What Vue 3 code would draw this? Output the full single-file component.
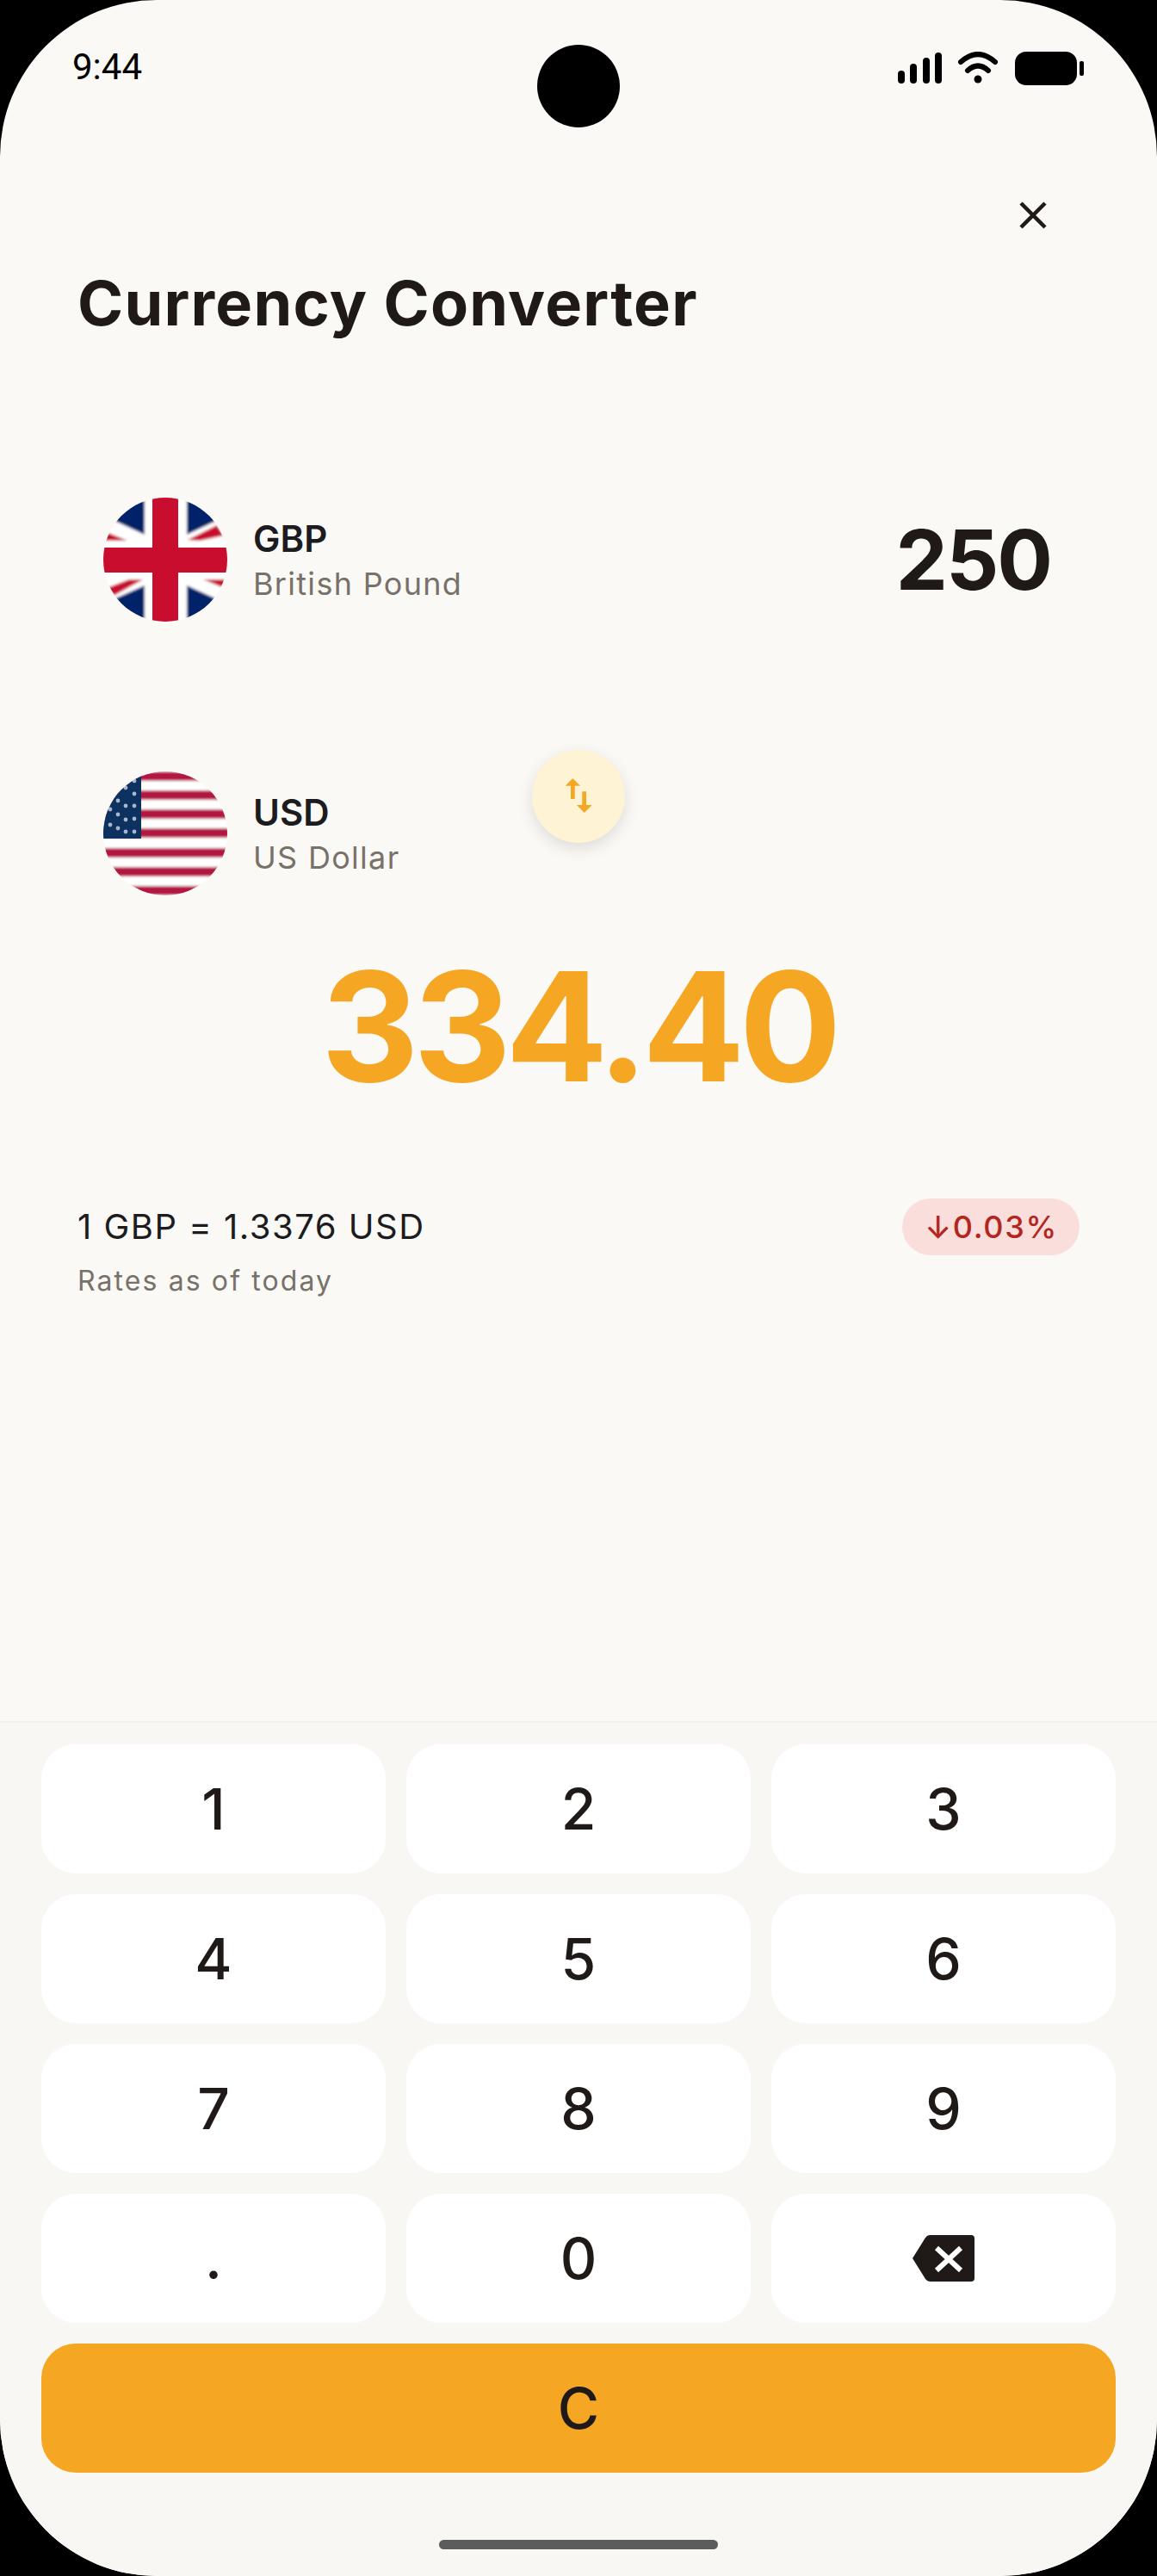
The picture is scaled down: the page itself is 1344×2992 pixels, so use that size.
<template>
  <div class="phone">
    <div class="camera"></div>

    <div class="status-bar">
      <span class="time">9:44</span>
      <svg class="status-icons" width="216" height="40" viewBox="0 0 216 40">
        <rect x="0" y="22" width="8" height="15" rx="4" />
        <rect x="14" y="14" width="8" height="23" rx="4" />
        <rect x="29" y="7" width="8" height="30" rx="4" />
        <rect x="43" y="1" width="8" height="36" rx="4" />
        <path d="M73 12 Q93 -6 113 12" fill="none" stroke="#000" stroke-width="6" stroke-linecap="round" />
        <path d="M81 22 Q93 11 105 22" fill="none" stroke="#000" stroke-width="6" stroke-linecap="round" />
        <circle cx="93" cy="32" r="4.5" />
        <rect x="136" y="0" width="72" height="39" rx="13" />
        <rect x="211" y="11" width="5" height="17" rx="2" />
      </svg>
    </div>

    <div class="close-row">
      <svg width="32" height="32" viewBox="0 0 32 32">
        <path d="M2 2 L30 30 M30 2 L2 30" stroke="#1f1a17" stroke-width="4.5" fill="none" />
      </svg>
    </div>

    <h1 class="title">Currency Converter</h1>

    <div class="currency-row from">
      <div class="flag">
        <svg width="144" height="144" viewBox="0 0 144 144">
          <g filter="url(#soft)">
            <rect x="-6" y="-6" width="156" height="156" fill="#fff" />
            <path d="M48 -6V43L-6 18V-6Z M97 -6V43L150 18V-6Z M48 102V150H-6V126Z M97 102V150H150V126Z" fill="#012169" />
            <path d="M-6 36L28 50H-6Z M98 49L132 32L140 44L112 50Z M46 95H30L4 105L12 114Z M116 95H150V109Z" fill="#c8102e" />
          </g>
          <g filter="url(#softer)">
            <path d="M57 -6H87V58H150V87H87V150H57V87H-6V58H57Z" fill="#c8102e" />
          </g>
          <defs>
            <filter id="soft" filterUnits="userSpaceOnUse" x="-10" y="-10" width="164" height="164"><feGaussianBlur stdDeviation="1.5" /></filter>
            <filter id="softer" filterUnits="userSpaceOnUse" x="-10" y="-10" width="164" height="164"><feGaussianBlur stdDeviation="0.7" /></filter>
          </defs>
        </svg>
      </div>
      <div class="names">
        <div class="code">GBP</div>
        <div class="name">British Pound</div>
      </div>
      <div class="amount">250</div>
    </div>

    <div class="currency-row to">
      <div class="flag">
        <svg width="144" height="144" viewBox="0 0 144 144">
          <g filter="url(#soft)">
            <rect x="-6" y="-6" width="156" height="156" fill="#fff" />
            <rect v-for="y in stripes" :key="y" x="-6" :y="y" width="156" height="11" fill="#b31942" />
          </g>
          <g filter="url(#softer)">
            <rect x="-6" y="-6" width="50" height="84" fill="#0a3161" />
            <circle v-for="(s, i) in stars" :key="i" :cx="s[0]" :cy="s[1]" r="2.4" fill="#a9b7cb" />
          </g>
        </svg>
      </div>
      <div class="names">
        <div class="code">USD</div>
        <div class="name">US Dollar</div>
      </div>
      <button class="swap">
        <svg width="32" height="42" viewBox="0 0 32 42">
          <path d="M9.3 0L18 8.7H11.7V24H7V8.7H0.7Z M20.3 15.3H25V31H31.7L22.7 40L14 31H20.3Z" fill="#f5a623" />
        </svg>
      </button>
    </div>

    <div class="result">334.40</div>

    <div class="rate-row">
      <div>
        <div class="rate">1 GBP = 1.3376 USD</div>
        <div class="rate-date">Rates as of today</div>
      </div>
      <div class="change">↓0.03%</div>
    </div>

    <div class="keypad">
      <div class="keys">
        <button v-for="k in keys" :key="k" class="key">{{ k }}</button>
        <button class="key">
          <svg width="72" height="54" viewBox="0 0 72 54">
            <path d="M0 27L15 3Q17 0 20 0H68Q72 0 72 4V50Q72 54 68 54H20Q17 54 15 51Z" fill="#1f1a17" />
            <path d="M28 15L56 41M56 15L28 41" stroke="#fff" stroke-width="6" fill="none" />
          </svg>
        </button>
        <button class="key clear">C</button>
      </div>
      <div class="home-bar"></div>
    </div>
  </div>
</template>

<script setup>
const keys = ['1', '2', '3', '4', '5', '6', '7', '8', '9', '.', '0']
const stripes = [0, 22, 44, 66, 89, 111, 133]
const stars = [
  [36, 11], [26, 19], [36, 26], [17, 34], [26, 40], [36, 40], [8, 44],
  [17, 50], [26, 56], [36, 55], [8, 62], [17, 66], [26, 70], [36, 70]
]
</script>

<style scoped>
.phone {
  position: relative;
  width: 1344px;
  height: 2992px;
  background: #faf9f5;
  border-radius: 182px;
  overflow: hidden;
  display: flex;
  flex-direction: column;
  font-family: Inter, "Noto Sans", sans-serif;
  color: #1f1a17;
}
.camera {
  position: absolute;
  left: 624px;
  top: 52px;
  width: 96px;
  height: 96px;
  border-radius: 50%;
  background: #000;
}
.status-bar {
  height: 120px;
  padding: 60px 84px 0;
  box-sizing: border-box;
  display: flex;
  justify-content: space-between;
  align-items: flex-start;
}
.time {
  font-family: Roboto, sans-serif;
  font-size: 42px;
  line-height: 36px;
  color: #000;
}
.status-icons {
  margin-right: 1px;
}
.close-row {
  height: 32px;
  margin-top: 114px;
  padding-right: 128px;
  display: flex;
  justify-content: flex-end;
}
.title {
  margin: 38px 0 0 90px;
  font-size: 72px;
  line-height: 96px;
  font-weight: 700;
  letter-spacing: 1.2px;
}
.currency-row {
  position: relative;
  display: flex;
  align-items: center;
  padding: 0 120px;
}
.from {
  margin-top: 178px;
}
.to {
  margin-top: 174px;
}
.flag {
  width: 144px;
  height: 144px;
  border-radius: 50%;
  overflow: hidden;
  flex-shrink: 0;
}
.flag svg {
  display: block;
}
.names {
  margin-left: 30px;
}
.code {
  font-size: 42px;
  line-height: 50px;
  font-weight: 600;
  color: #1c1b1f;
}
.name {
  margin-top: 5px;
  font-size: 36px;
  line-height: 44px;
  letter-spacing: 1.3px;
  color: #78716a;
}
.amount {
  margin-left: auto;
  margin-right: 3px;
  font-size: 96px;
  line-height: 120px;
  font-weight: 700;
  letter-spacing: -2px;
}
.swap {
  position: absolute;
  left: 618px;
  top: -25px;
  width: 108px;
  height: 108px;
  padding: 0;
  border: none;
  border-radius: 50%;
  background: #fff3d6;
  box-shadow: 0 6px 18px rgba(0, 0, 0, 0.12);
  display: flex;
  align-items: center;
  justify-content: center;
}
.result {
  margin-top: 52px;
  text-align: center;
  font-size: 176px;
  line-height: 200px;
  font-weight: 700;
  letter-spacing: -6.5px;
  color: #f5a623;
}
.rate-row {
  margin-top: 100px;
  padding: 0 90px;
  display: flex;
  justify-content: space-between;
  align-items: flex-start;
}
.rate {
  font-size: 40px;
  line-height: 66px;
  letter-spacing: 1.5px;
  color: #1c1b1f;
}
.rate-date {
  margin-top: 10px;
  font-size: 32px;
  line-height: 40px;
  letter-spacing: 2.1px;
  color: #78716a;
}
.change {
  height: 66px;
  padding: 0 25px 0 26px;
  border-radius: 33px;
  background: #fadedc;
  color: #b3261e;
  font-size: 36px;
  line-height: 66px;
  font-weight: 500;
  letter-spacing: 1.7px;
}
.keypad {
  margin-top: auto;
  border-top: 2px solid #f2f0ec;
  background: #f8f7f3;
  height: 993px;
  box-sizing: border-box;
  padding: 25px 48px 0;
}
.keys {
  display: grid;
  grid-template-columns: repeat(3, 400px);
  grid-auto-rows: 150px;
  gap: 24px;
}
.key {
  border: none;
  border-radius: 40px;
  background: #fff;
  padding: 0;
  font-family: inherit;
  font-size: 66px;
  font-weight: 500;
  color: #1f1a17;
  display: flex;
  align-items: center;
  justify-content: center;
}
.clear {
  grid-column: 1 / -1;
  background: #f5a623;
}
.home-bar {
  width: 324px;
  height: 11px;
  margin: 78px auto 0;
  border-radius: 6px;
  background: #5c5c5c;
}
</style>

<style>
html, body {
  margin: 0;
  background: #000;
}
</style>
